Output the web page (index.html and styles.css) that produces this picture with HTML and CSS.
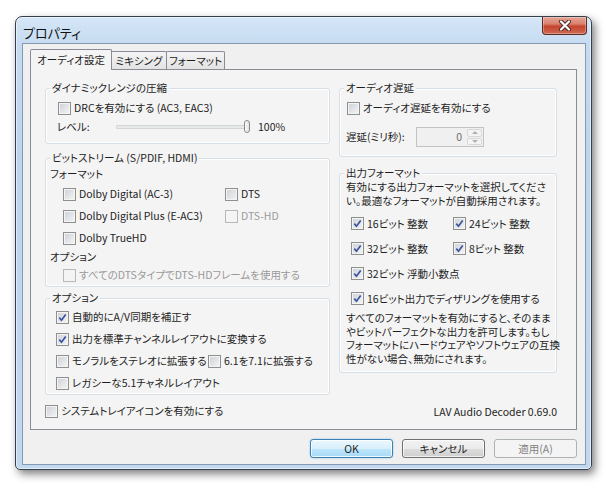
FILE: index.html
```html
<!DOCTYPE html>
<html lang="ja">
<head>
    <meta charset="UTF-8">
    <title>プロパティ</title>
    <link rel="stylesheet" href="styles.css">
</head>
<body>
    <div class="window">
        <div class="titlebar">
            <span class="title">プロパティ</span>
            <span class="close">
                <svg width="14" height="11" viewBox="0 0 14 11">
                    <path d="M3 1.5 11 9.5 M11 1.5 3 9.5" stroke="#4a2a25" stroke-width="4" stroke-linecap="round"/>
                    <path d="M3 1.5 11 9.5 M11 1.5 3 9.5" stroke="#fff" stroke-width="2.2" stroke-linecap="round"/>
                </svg>
            </span>
        </div>

        <div class="client">
            <div class="tabs">
                <span class="tab active">オーディオ設定</span>
                <span class="tab tab-mix">ミキシング</span>
                <span class="tab tab-fmt">フォーマット</span>
            </div>

            <div class="page">
                <div class="col col-left">
                    <fieldset class="group g-drc">
                        <legend>ダイナミックレンジの圧縮</legend>
                        <div class="group-body">
                            <div class="row h18"><span class="box"></span>DRCを有効にする (AC3, EAC3)</div>
                            <div class="row h20 level">
                                <span class="level-label">レベル:</span>
                                <span class="slider"><span class="track"></span><span class="thumb"></span></span>
                                <span>100%</span>
                            </div>
                        </div>
                    </fieldset>

                    <fieldset class="group g-bit">
                        <legend>ビットストリーム (S/PDIF, HDMI)</legend>
                        <div class="group-body">
                            <div class="sub h18">フォーマット</div>
                            <div class="bit-grid">
                                <div class="row h22"><span class="box"></span>Dolby Digital (AC-3)</div>
                                <div class="row h22"><span class="box"></span>DTS</div>
                                <div class="row h22"><span class="box"></span>Dolby Digital Plus (E-AC3)</div>
                                <div class="row h22 off"><span class="box"></span>DTS-HD</div>
                                <div class="row h22"><span class="box"></span>Dolby TrueHD</div>
                            </div>
                            <div class="sub h16">オプション</div>
                            <div class="row h20 off indent"><span class="box"></span>すべてのDTSタイプでDTS-HDフレームを使用する</div>
                        </div>
                    </fieldset>

                    <fieldset class="group g-opt">
                        <legend>オプション</legend>
                        <div class="group-body">
                            <div class="row h22"><span class="box on"><svg width="9" height="9" viewBox="0 0 9 9"><path d="M1.3 4.6 3.5 7.2 7.7 1.4" fill="none" stroke="#3a54a0" stroke-width="1.7"/></svg></span>自動的にA/V同期を補正す</div>
                            <div class="row h22"><span class="box on"><svg width="9" height="9" viewBox="0 0 9 9"><path d="M1.3 4.6 3.5 7.2 7.7 1.4" fill="none" stroke="#3a54a0" stroke-width="1.7"/></svg></span>出力を標準チャンネルレイアウトに変換する</div>
                            <div class="row h22">
                                <span class="pair"><span class="box"></span>モノラルをステレオに拡張する</span>
                                <span class="box"></span>6.1を7.1に拡張する
                            </div>
                            <div class="row h22"><span class="box"></span>レガシーな5.1チャネルレイアウト</div>
                        </div>
                    </fieldset>

                    <div class="row h18 tray"><span class="box"></span>システムトレイアイコンを有効にする</div>
                </div>

                <div class="col col-right">
                    <fieldset class="group g-delay">
                        <legend>オーディオ遅延</legend>
                        <div class="group-body">
                            <div class="row h18"><span class="box"></span>オーディオ遅延を有効にする</div>
                            <div class="row delay">
                                <span class="delay-label">遅延(ミリ秒):</span>
                                <span class="spin">
                                    <span class="spin-value">0</span>
                                    <span class="spin-btns">
                                        <span class="spin-btn up"></span>
                                        <span class="spin-btn down"></span>
                                    </span>
                                </span>
                            </div>
                        </div>
                    </fieldset>

                    <fieldset class="group g-out">
                        <legend>出力フォーマット</legend>
                        <div class="group-body">
                            <p class="desc">有効にする出力フォーマットを選択してくださ<br>い。最適なフォーマットが自動採用されます。</p>
                            <div class="out-grid">
                                <div class="row h25"><span class="box on"><svg width="9" height="9" viewBox="0 0 9 9"><path d="M1.3 4.6 3.5 7.2 7.7 1.4" fill="none" stroke="#3a54a0" stroke-width="1.7"/></svg></span>16ビット 整数</div>
                                <div class="row h25"><span class="box on"><svg width="9" height="9" viewBox="0 0 9 9"><path d="M1.3 4.6 3.5 7.2 7.7 1.4" fill="none" stroke="#3a54a0" stroke-width="1.7"/></svg></span>24ビット 整数</div>
                                <div class="row h25"><span class="box on"><svg width="9" height="9" viewBox="0 0 9 9"><path d="M1.3 4.6 3.5 7.2 7.7 1.4" fill="none" stroke="#3a54a0" stroke-width="1.7"/></svg></span>32ビット 整数</div>
                                <div class="row h25"><span class="box on"><svg width="9" height="9" viewBox="0 0 9 9"><path d="M1.3 4.6 3.5 7.2 7.7 1.4" fill="none" stroke="#3a54a0" stroke-width="1.7"/></svg></span>8ビット 整数</div>
                                <div class="row h25 wide"><span class="box on"><svg width="9" height="9" viewBox="0 0 9 9"><path d="M1.3 4.6 3.5 7.2 7.7 1.4" fill="none" stroke="#3a54a0" stroke-width="1.7"/></svg></span>32ビット 浮動小数点</div>
                                <div class="row h25 wide"><span class="box on"><svg width="9" height="9" viewBox="0 0 9 9"><path d="M1.3 4.6 3.5 7.2 7.7 1.4" fill="none" stroke="#3a54a0" stroke-width="1.7"/></svg></span>16ビット出力でディザリングを使用する</div>
                            </div>
                            <p class="note">すべてのフォーマットを有効にすると、そのまま<br>やビットパーフェクトな出力を許可します。もし<br>フォーマットにハードウェアやソフトウェアの互換<br>性がない場合、無効にされます。</p>
                        </div>
                    </fieldset>

                    <div class="version">LAV Audio Decoder 0.69.0</div>
                </div>
            </div>

            <div class="buttons">
                <span class="btn default">OK</span>
                <span class="btn">キャンセル</span>
                <span class="btn disabled">適用(A)</span>
            </div>
        </div>
    </div>
</body>
</html>
```

FILE: styles.css
```css
* {
    margin: 0;
    padding: 0;
    box-sizing: border-box;
}

body {
    background: #fff;
    width: 614px;
    height: 492px;
    overflow: hidden;
    padding: 16px 0 0 15px;
    font-family: "Noto Sans CJK JP", "Noto Sans", sans-serif;
    font-size: 10.5px;
    line-height: 14px;
    font-feature-settings: "palt";
    color: #1e1e1e;
}

/* window frame */

.window {
    width: 577px;
    height: 454px;
    border: 1px solid #34404d;
    border-radius: 7px 7px 5px 5px;
    padding: 0 5px 4px 6px;
    background: linear-gradient(to bottom, #d5e6f7 0%, #c6dbf1 6%, #bcd4ee 30%, #c2d8ef 100%);
    box-shadow: inset 0 0 0 1px rgba(255,255,255,0.55), 3px 4px 9px rgba(0,0,0,0.5);
}

.titlebar {
    height: 26px;
    display: flex;
    justify-content: space-between;
    align-items: flex-start;
}

.title {
    font-size: 13px;
    line-height: 16px;
    padding-left: 1px;
    padding-top: 8px;
    color: #111;
}

.close {
    width: 45px;
    height: 18px;
    margin-right: -1px;
    border: 1px solid #5c2a24;
    border-top: none;
    border-radius: 0 0 4px 4px;
    background: linear-gradient(to bottom, #e6a596 0%, #d9826f 40%, #c5452f 55%, #cf6a52 100%);
    box-shadow: inset 0 0 0 1px rgba(255,255,255,0.3);
    display: flex;
    align-items: center;
    justify-content: center;
}

.client {
    height: 422px;
    background: #f0f0f0;
    border: 1px solid #8599b0;
    padding: 5px 8px 0 7px;
}

/* tabs */

.tabs {
    height: 20px;
    display: flex;
    align-items: flex-end;
}

.tab {
    height: 18px;
    line-height: 17px;
    border: 1px solid #898c95;
    border-bottom: none;
    border-radius: 2px 2px 0 0;
    background: linear-gradient(to bottom, #f4f4f4, #e3e3e3);
    text-align: center;
    margin-left: -1px;
}

.tab.active {
    width: 82px;
    height: 21px;
    line-height: 19px;
    margin-left: 0;
    margin-bottom: -1px;
    background: #f4f4f4;
    position: relative;
    z-index: 1;
}

.tab-mix {
    width: 56px;
}

.tab-fmt {
    width: 59px;
}

.page {
    height: 361px;
    border: 1px solid #898c95;
    background: #f4f4f4;
    padding: 11px 0 0 14px;
    display: flex;
    gap: 9px;
}

.col {
    display: flex;
    flex-direction: column;
}

.col-left {
    width: 285px;
}

.col-right {
    width: 218px;
}

/* group boxes */

.group {
    border: 1px solid #d5dfe5;
    border-radius: 3px;
    min-width: 0;
    box-shadow: inset 0 0 0 1px #fff;
}

.group legend {
    margin-left: 4px;
    padding: 0 2px;
    background: #f4f4f4;
    line-height: 14px;
}

.g-bit {
    margin-top: 7px;
}

.g-opt {
    margin-top: 4px;
}

.g-drc .group-body {
    padding: 4px 11px 6px;
}

.g-bit .group-body {
    padding: 0 4px 1px;
}

.g-opt .group-body {
    padding: 1px 10px 0;
}

.g-delay .group-body {
    padding: 4px 6px 9px;
}

.g-out {
    margin-top: 9px;
}

.g-out .group-body {
    padding: 0 6px 7px;
}

/* rows and checkboxes */

.row {
    display: flex;
    align-items: center;
    gap: 3px;
    white-space: nowrap;
}

.h16 { height: 16px; }
.h18 { height: 18px; }
.h20 { height: 20px; }
.h22 { height: 22px; }
.h25 { height: 25px; }

.sub {
    display: flex;
    align-items: center;
}

.box {
    width: 13px;
    height: 13px;
    flex: none;
    border: 1px solid #8e8f8f;
    background: linear-gradient(135deg, #cdd1d6, #f5f5f5);
    box-shadow: inset 0 0 0 1px #f4f4f4;
    display: flex;
    align-items: center;
    justify-content: center;
}

.g-drc .box,
.g-delay .box {
    margin-left: 1px;
}

.off {
    color: #9a9a9a;
}

.off .box {
    border-color: #b8b8b8;
    background: #f4f4f4;
}

.bit-grid {
    display: grid;
    grid-template-columns: 162px 1fr;
    padding-left: 13px;
}

.indent {
    padding-left: 13px;
}

.pair {
    display: flex;
    align-items: center;
    gap: 3px;
    width: 149px;
}

.tray {
    margin-top: 7px;
}

/* slider */

.level-label {
    width: 56px;
}

.slider {
    width: 136px;
    height: 14px;
    display: flex;
    align-items: center;
    position: relative;
    margin-right: 3px;
}

.track {
    width: 132px;
    height: 4px;
    border: 1px solid #d4d4d4;
    border-radius: 1px;
    background: #e7eaea;
}

.thumb {
    position: absolute;
    left: 128px;
    top: 0;
    width: 6px;
    height: 13px;
    border: 1px solid #8a8a8a;
    border-radius: 3px;
    background: linear-gradient(to right, #fbfbfb, #e2e2e2);
}

/* spin box */

.delay {
    margin-top: 10px;
    gap: 0;
}

.delay-label {
    width: 70px;
}

.spin {
    width: 68px;
    height: 20px;
    border: 1px solid #c3c3c3;
    background: #f0f0f0;
    display: flex;
    padding: 1px;
}

.spin-value {
    flex: 1;
    text-align: right;
    line-height: 16px;
    padding-right: 5px;
    color: #6d6d6d;
}

.spin-btns {
    width: 15px;
    display: flex;
    flex-direction: column;
    gap: 1px;
}

.spin-btn {
    flex: 1;
    border: 1px solid #d8d8d8;
    border-radius: 2px;
    background: #f4f4f4;
    display: flex;
    align-items: center;
    justify-content: center;
}

.spin-btn::before {
    content: '';
    border-left: 3px solid transparent;
    border-right: 3px solid transparent;
}

.spin-btn.up::before {
    border-bottom: 3px solid #b0b0b0;
}

.spin-btn.down::before {
    border-top: 3px solid #b0b0b0;
}

/* output format */

.desc {
    line-height: 14px;
    white-space: nowrap;
}

.out-grid {
    display: grid;
    grid-template-columns: 102px 1fr;
    padding-left: 5px;
    margin-top: 3px;
}

.out-grid .wide {
    grid-column: 1 / 3;
}

.note {
    line-height: 13.5px;
    white-space: nowrap;
}

.version {
    margin-top: 32px;
    text-align: right;
    line-height: 14px;
}

/* buttons */

.buttons {
    margin-top: 9px;
    display: flex;
    justify-content: flex-end;
    gap: 9px;
}

.btn {
    width: 83px;
    height: 19px;
    line-height: 17px;
    text-align: center;
    border: 1px solid #707070;
    border-radius: 3px;
    background: linear-gradient(to bottom, #f2f2f2 0%, #ebebeb 50%, #dddddd 51%, #cfcfcf 100%);
    box-shadow: inset 0 0 0 1px rgba(255,255,255,0.7);
}

.btn.default {
    border-color: #3c7fb1;
    background: linear-gradient(to bottom, #eaf6fd 0%, #d9f0fc 50%, #bee6fd 51%, #a7d9f5 100%);
    box-shadow: inset 0 0 0 1px rgba(255,255,255,0.8), 0 0 2px #8fc8ee;
}

.btn.disabled {
    border-color: #adb2b5;
    background: #f4f4f4;
    box-shadow: none;
    color: #838383;
}
```
